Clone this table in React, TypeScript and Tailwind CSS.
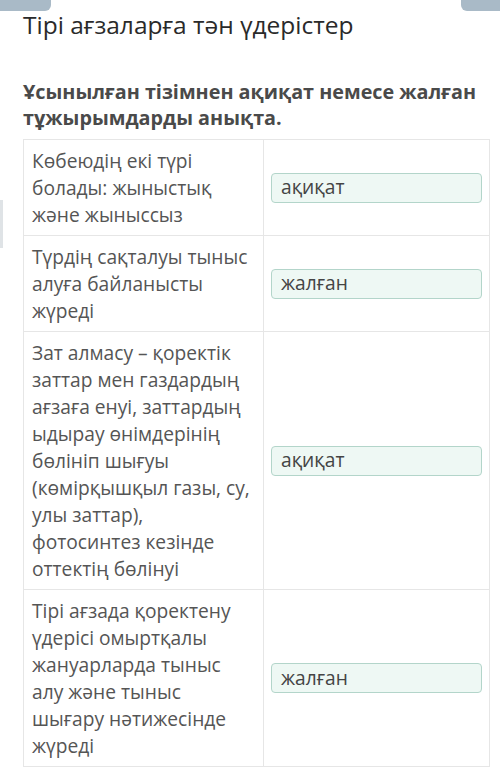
const rows = [
  { text: "Көбеюдің екі түрі болады: жыныстық және жыныссыз", answer: "ақиқат" },
  { text: "Түрдің сақталуы тыныс алуға байланысты жүреді", answer: "жалған" },
  {
    text: "Зат алмасу – қоректік заттар мен газдардың ағзаға енуі, заттардың ыдырау өнімдерінің бөлініп шығуы (көмірқышқыл газы, су, улы заттар), фотосинтез кезінде оттектің бөлінуі",
    answer: "ақиқат",
  },
  {
    text: "Тірі ағзада қоректену үдерісі омыртқалы жануарларда тыныс алу және тыныс шығару нәтижесінде жүреді",
    answer: "жалған",
  },
]

export default function App() {
  return (
    <div className="relative min-h-[777px] w-[500px] bg-white font-['Open_Sans',sans-serif]">
      <div className="absolute left-0 top-0 h-[11px] w-[51px] rounded-br-md bg-[#a9bac7]" />
      <div className="absolute right-0 top-0 h-[11px] w-[39px] rounded-bl-md bg-[#a9bac7]" />
      <div className="absolute left-0 top-[200px] h-[48px] w-[3px] bg-[#dfe3e6]" />

      <div className="px-[23px] pt-[9px] pb-3">
        <h1 className="text-[24.5px] leading-[32px] text-[#2a2a2a]">Тірі ағзаларға тән үдерістер</h1>
        <p className="mt-[38px] text-[19.8px] font-bold leading-[26px] text-[#4a4a4a]">
          Ұсынылған тізімнен ақиқат немесе жалған тұжырымдарды анықта.
        </p>

        <div className="mt-[8px] w-[467px] border border-[#e6e6e6]">
          {rows.map((row, i) => (
            <div key={i} className="flex border-t border-[#e6e6e6] first:border-t-0">
              <div className="w-[240px] shrink-0 border-r border-[#e6e6e6] px-[8px] py-[7px] text-[19.2px] leading-[27px] text-[#555]">
                {row.text}
              </div>
              <div className="flex flex-1 items-center px-[7px]">
                <div className="flex h-[30px] w-full items-center rounded-[4px] border border-[#b3d5ca] bg-[#eef8f4] px-[9px] text-[19.2px] text-[#444]">
                  {row.answer}
                </div>
              </div>
            </div>
          ))}
        </div>
      </div>
    </div>
  )
}
